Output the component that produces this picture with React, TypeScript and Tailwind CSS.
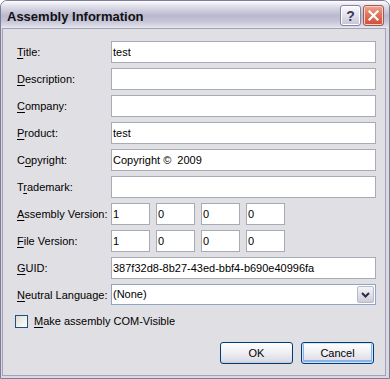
import React from 'react';

function Key({ text, at }: { text: string; at: number }) {
  return (
    <span>
      {text.slice(0, at)}
      <span className="underline underline-offset-[2px]">{text[at]}</span>
      {text.slice(at + 1)}
    </span>
  );
}

function Row({ label, at, children }: { label: string; at: number; children: React.ReactNode }) {
  return (
    <div className="flex h-[22px] items-center">
      <div className="w-[94px] shrink-0">
        <Key text={label} at={at} />
      </div>
      {children}
    </div>
  );
}

function TextBox({ value = '', className = 'w-[265px]' }: { value?: string; className?: string }) {
  return (
    <div className={`h-[22px] border border-[#a5acb5] bg-white pl-[1px] leading-[20px] whitespace-pre ${className}`}>
      {value}
    </div>
  );
}

export default function App() {
  return (
    <div className="flex h-[379px] w-[390px] flex-col overflow-hidden rounded-t-[7px] border border-[#7e7d98] bg-[#d9d9e4] font-['Liberation_Sans',Arial,sans-serif] text-[11px] text-black">
      {/* title bar */}
      <div className="flex h-[27px] shrink-0 items-start bg-[linear-gradient(to_bottom,#ffffff_0%,#e9e9f1_12%,#cdcddd_35%,#b9b8cf_55%,#c5c5d7_75%,#dedee8_95%,#eaeaf0_100%)] pr-[5px] pl-[6px]">
        <div className="pt-[7px] text-[13px] leading-[17px] font-bold text-[#111]">Assembly Information</div>
        <div className="ml-auto flex gap-[2px] pt-[4px]">
          <div className="flex h-[21px] w-[21px] items-center justify-center rounded-[3px] border border-[#8584a2] bg-[linear-gradient(to_bottom,#fbfbfd,#dcdce8_60%,#c4c3d6)] shadow-[inset_0_0_0_1px_#ffffff] text-[14px] leading-none font-bold text-[#3a3a55]">
            ?
          </div>
          <div className="flex h-[21px] w-[21px] items-center justify-center rounded-[3px] border border-[#9b5a54] bg-[linear-gradient(to_bottom,#f3a693,#e0735c_45%,#cf5038)] shadow-[inset_0_0_0_1px_#f6d2c8]">
            <svg width="13" height="13" viewBox="0 0 13 13">
              <path d="M2.5 2.5 L10.5 10.5 M10.5 2.5 L2.5 10.5" stroke="#ffffff" strokeWidth="2.2" strokeLinecap="square" />
            </svg>
          </div>
        </div>
      </div>

      {/* body */}
      <div className="mr-[3px] mb-[2px] ml-[1px] flex flex-1 flex-col border border-[#a3a2ba] bg-[#e0dfe3] pt-[12px] pr-[9px] pl-[14px]">
        <div className="flex flex-col gap-[5px]">
          <Row label="Title:" at={0}>
            <TextBox value="test" />
          </Row>
          <Row label="Description:" at={0}>
            <TextBox />
          </Row>
          <Row label="Company:" at={0}>
            <TextBox />
          </Row>
          <Row label="Product:" at={0}>
            <TextBox value="test" />
          </Row>
          <Row label="Copyright:" at={1}>
            <TextBox value="Copyright ©  2009" />
          </Row>
          <Row label="Trademark:" at={1}>
            <TextBox />
          </Row>
          <Row label="Assembly Version:" at={0}>
            <div className="flex gap-[6px]">
              <TextBox value="1" className="w-[39px]" />
              <TextBox value="0" className="w-[39px]" />
              <TextBox value="0" className="w-[39px]" />
              <TextBox value="0" className="w-[39px]" />
            </div>
          </Row>
          <Row label="File Version:" at={0}>
            <div className="flex gap-[6px]">
              <TextBox value="1" className="w-[39px]" />
              <TextBox value="0" className="w-[39px]" />
              <TextBox value="0" className="w-[39px]" />
              <TextBox value="0" className="w-[39px]" />
            </div>
          </Row>
          <Row label="GUID:" at={0}>
            <TextBox value="387f32d8-8b27-43ed-bbf4-b690e40996fa" />
          </Row>
          <div className="flex h-[22px] items-start">
            <div className="w-[94px] shrink-0 pt-[3px]">
              <Key text="Neutral Language:" at={0} />
            </div>
            <div className="flex h-[21px] w-[265px] items-center border border-[#8ea4c1] bg-white pr-[1px] pl-[1px]">
              <span className="flex-1">(None)</span>
              <div className="flex h-[17px] w-[17px] items-center justify-center rounded-[2px] border border-[#b9b9cc] bg-[linear-gradient(to_bottom,#f4f4f8,#dcdce6_60%,#cdcdda)]">
                <svg width="9" height="6" viewBox="0 0 9 6">
                  <path d="M1 1 L4.5 4.5 L8 1" fill="none" stroke="#2b2b3f" strokeWidth="2" />
                </svg>
              </div>
            </div>
          </div>
        </div>

        <div className="mt-[9px] ml-[-2px] flex h-[13px] items-center gap-[6px]">
          <div className="h-[13px] w-[13px] border border-[#1c5180] bg-[linear-gradient(135deg,#dcdcd7,#ffffff)]" />
          <Key text="Make assembly COM-Visible" at={0} />
        </div>

        <div className="mt-[14px] flex justify-end gap-[8px] pr-[2px]">
          <div className="flex h-[22px] w-[73px] items-center justify-center rounded-[3px] border border-[#003c74] bg-[linear-gradient(to_bottom,#ffffff,#f2f2f6_40%,#dcdce6_90%,#c8c8d6)]">
            OK
          </div>
          <div className="flex h-[22px] w-[73px] items-center justify-center rounded-[3px] border border-[#003c74] bg-[linear-gradient(to_bottom,#ffffff,#f2f2f6_40%,#dcdce6_90%,#c8c8d6)] shadow-[inset_0_0_0_1px_#cee7ff,inset_0_-1px_0_2px_#8cb0e8]">
            Cancel
          </div>
        </div>
      </div>
    </div>
  );
}
